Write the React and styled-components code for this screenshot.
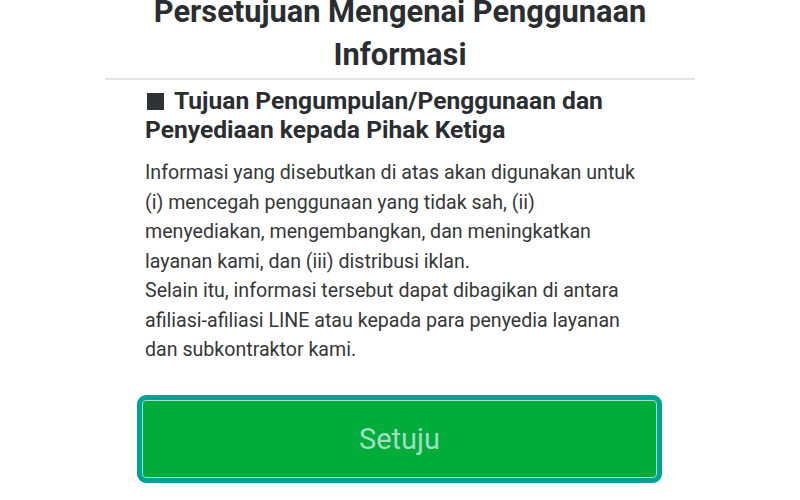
import React from 'react';
import styled, {createGlobalStyle} from 'styled-components';

const GlobalStyle = createGlobalStyle`
  html, body {
    margin: 0;
    padding: 0;
    background: #ffffff;
    font-family: Roboto, "Noto Sans", sans-serif;
    overflow: hidden;
  }
`
const Page = styled.div`
  width: 590px;
  margin: -10px auto 0;
`
const Title = styled.h1`
  margin: 0;
  padding-bottom: 2px;
  font-size: 30.8px;
  line-height: 43px;
  font-weight: 700;
  color: #2b2e31;
  text-align: center;
  border-bottom: 2px solid #e4e4e4;
`
const Body = styled.div`
  padding: 6px 40px 0;
`
const Heading = styled.h2`
  margin: 0;
  font-size: 24.6px;
  line-height: 29px;
  font-weight: 700;
  color: #2b2e31;
`
const Square = styled.span`
  display: inline-block;
  width: 17px;
  height: 17px;
  margin: 0 10px 0 2px;
  background: #303336;
  vertical-align: -1px;
`
const Text = styled.p`
  margin: 14px 0 0;
  font-size: 19.6px;
  line-height: 29.5px;
  color: #353739;
`
const ButtonRow = styled.div`
  padding: 30px 33px 0 32px;
`
const Button = styled.button`
  display: block;
  width: 100%;
  height: 88px;
  box-sizing: border-box;
  border: 5px solid #00a196;
  border-radius: 9px;
  padding: 0;
  background: #00a196;
  font-family: Roboto, "Noto Sans", sans-serif;
  cursor: pointer;
`
const ButtonFace = styled.span`
  display: flex;
  align-items: center;
  justify-content: center;
  height: 100%;
  box-sizing: border-box;
  border: 1px solid #a6dccb;
  border-radius: 4px;
  background: #00ad3a;
  color: #a3dcc3;
  font-size: 29px;
`

const App = () => {
  return (
    <>
      <GlobalStyle/>
      <Page>
        <Title>Persetujuan Mengenai Penggunaan<br/>Informasi</Title>
        <Body>
          <Heading><Square/>Tujuan Pengumpulan/Penggunaan dan Penyediaan kepada Pihak Ketiga</Heading>
          <Text>
            Informasi yang disebutkan di atas akan digunakan untuk (i) mencegah penggunaan yang tidak sah, (ii) menyediakan, mengembangkan, dan meningkatkan layanan kami, dan (iii) distribusi iklan.<br/>
            Selain itu, informasi tersebut dapat dibagikan di antara afiliasi-afiliasi LINE atau kepada para penyedia layanan dan subkontraktor kami.
          </Text>
        </Body>
        <ButtonRow>
          <Button><ButtonFace>Setuju</ButtonFace></Button>
        </ButtonRow>
      </Page>
    </>
  );
}

export default App;
